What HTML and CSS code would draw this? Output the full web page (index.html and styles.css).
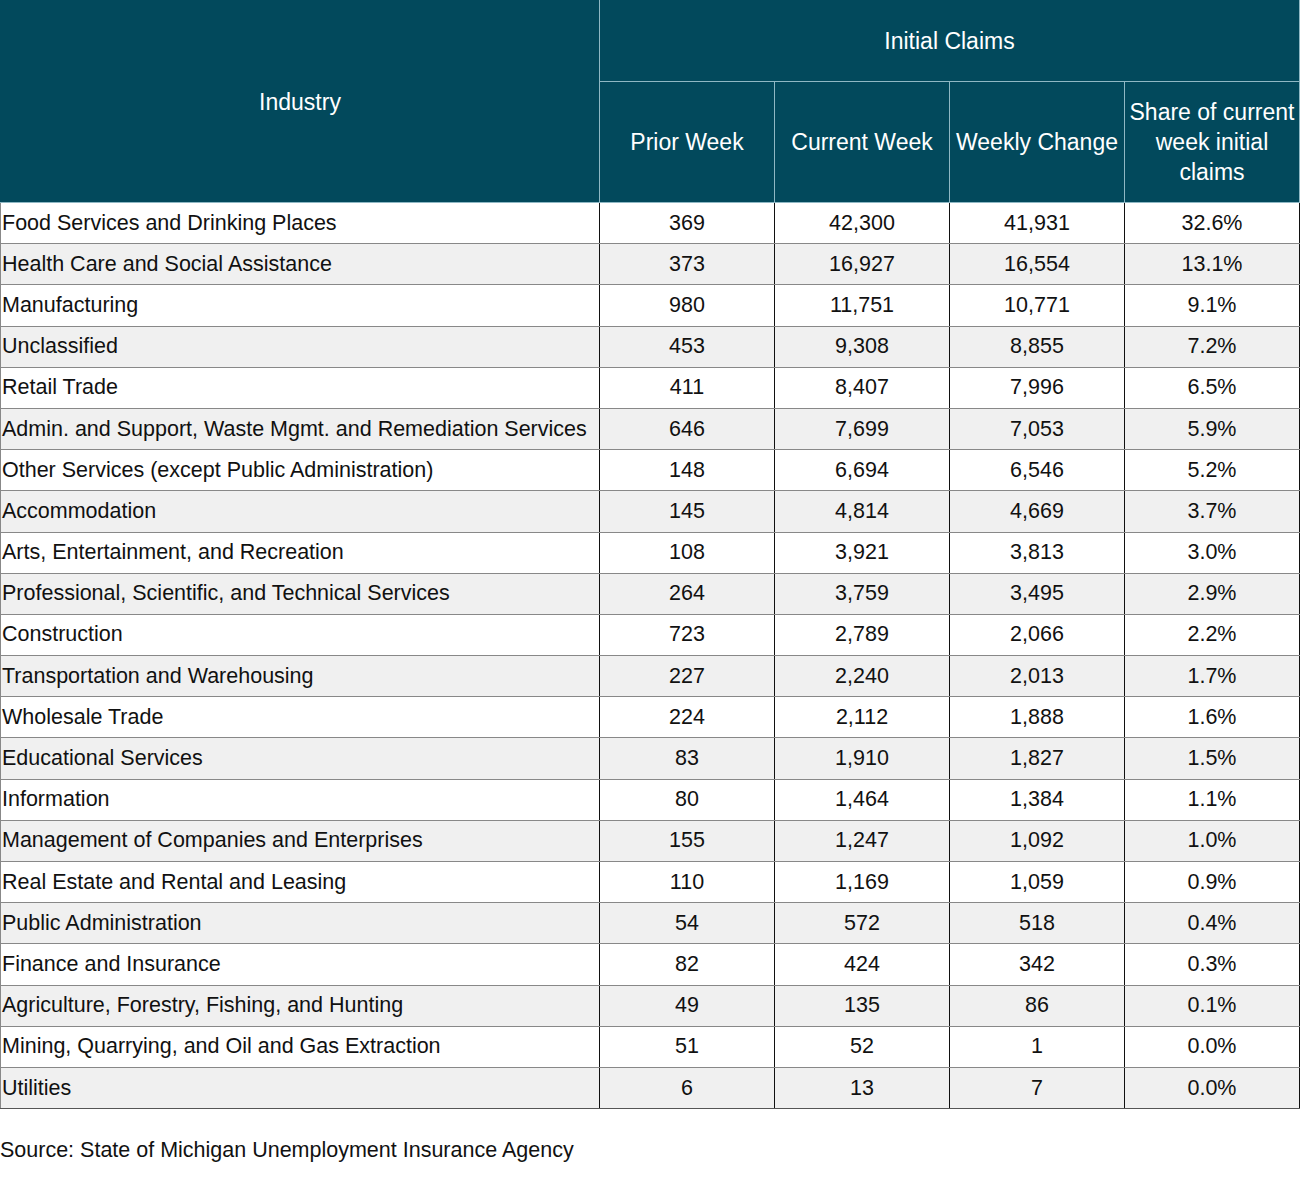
FILE: index.html
```html
<!DOCTYPE html>
<html lang="en">
<head>
  <meta charset="UTF-8">
  <meta name="viewport" content="width=device-width, initial-scale=1.0">
  <title>Initial Claims by Industry</title>
  <link rel="stylesheet" href="styles.css">
</head>
<body>
  <table class="claims">
    <colgroup>
      <col class="col-industry">
      <col class="col-num">
      <col class="col-num">
      <col class="col-num">
      <col class="col-num">
    </colgroup>
    <thead>
      <tr class="head-top">
        <th rowspan="2" class="head-industry">Industry</th>
        <th colspan="4">Initial Claims</th>
      </tr>
      <tr class="head-sub">
        <th>Prior Week</th>
        <th>Current Week</th>
        <th>Weekly Change</th>
        <th class="head-share">Share of current week initial claims</th>
      </tr>
    </thead>
    <tbody>
      <tr><td>Food Services and Drinking Places</td><td>369</td><td>42,300</td><td>41,931</td><td>32.6%</td></tr>
      <tr><td>Health Care and Social Assistance</td><td>373</td><td>16,927</td><td>16,554</td><td>13.1%</td></tr>
      <tr><td>Manufacturing</td><td>980</td><td>11,751</td><td>10,771</td><td>9.1%</td></tr>
      <tr><td>Unclassified</td><td>453</td><td>9,308</td><td>8,855</td><td>7.2%</td></tr>
      <tr><td>Retail Trade</td><td>411</td><td>8,407</td><td>7,996</td><td>6.5%</td></tr>
      <tr><td>Admin. and Support, Waste Mgmt. and Remediation Services</td><td>646</td><td>7,699</td><td>7,053</td><td>5.9%</td></tr>
      <tr><td>Other Services (except Public Administration)</td><td>148</td><td>6,694</td><td>6,546</td><td>5.2%</td></tr>
      <tr><td>Accommodation</td><td>145</td><td>4,814</td><td>4,669</td><td>3.7%</td></tr>
      <tr><td>Arts, Entertainment, and Recreation</td><td>108</td><td>3,921</td><td>3,813</td><td>3.0%</td></tr>
      <tr><td>Professional, Scientific, and Technical Services</td><td>264</td><td>3,759</td><td>3,495</td><td>2.9%</td></tr>
      <tr><td>Construction</td><td>723</td><td>2,789</td><td>2,066</td><td>2.2%</td></tr>
      <tr><td>Transportation and Warehousing</td><td>227</td><td>2,240</td><td>2,013</td><td>1.7%</td></tr>
      <tr><td>Wholesale Trade</td><td>224</td><td>2,112</td><td>1,888</td><td>1.6%</td></tr>
      <tr><td>Educational Services</td><td>83</td><td>1,910</td><td>1,827</td><td>1.5%</td></tr>
      <tr><td>Information</td><td>80</td><td>1,464</td><td>1,384</td><td>1.1%</td></tr>
      <tr><td>Management of Companies and Enterprises</td><td>155</td><td>1,247</td><td>1,092</td><td>1.0%</td></tr>
      <tr><td>Real Estate and Rental and Leasing</td><td>110</td><td>1,169</td><td>1,059</td><td>0.9%</td></tr>
      <tr><td>Public Administration</td><td>54</td><td>572</td><td>518</td><td>0.4%</td></tr>
      <tr><td>Finance and Insurance</td><td>82</td><td>424</td><td>342</td><td>0.3%</td></tr>
      <tr><td>Agriculture, Forestry, Fishing, and Hunting</td><td>49</td><td>135</td><td>86</td><td>0.1%</td></tr>
      <tr><td>Mining, Quarrying, and Oil and Gas Extraction</td><td>51</td><td>52</td><td>1</td><td>0.0%</td></tr>
      <tr><td>Utilities</td><td>6</td><td>13</td><td>7</td><td>0.0%</td></tr>
    </tbody>
  </table>
  <p class="source">Source: State of Michigan Unemployment Insurance Agency</p>
</body>
</html>
```

FILE: styles.css
```css
body {
  margin: 0;
  padding: 0;
  background: #fff;
  font-family: "Liberation Sans", Arial, sans-serif;
  color: #111;
}
.claims {
  width: 1299px;
  border-collapse: collapse;
  table-layout: fixed;
}
.col-industry {
  width: 599px;
}
.col-num {
  width: 175px;
}
.claims th {
  background: #02495c;
  color: #fff;
  font-weight: normal;
  font-size: 23px;
  line-height: 30px;
  text-align: center;
  padding: 0;
  border: 1px solid #8fb8c4;
}
.head-top th {
  height: 80px;
  border-top-color: #02495c;
}
.head-sub th {
  height: 120px;
}
.claims .head-industry {
  border-left-color: #02495c;
}
.claims .head-share {
  padding: 0 4px;
}
.claims td {
  height: 40.2px;
  padding: 0;
  font-size: 21.5px;
  text-align: center;
  border-top: 1px solid #888;
  border-bottom: 1px solid #888;
  border-left: 1px solid #111;
  border-right: 1px solid #111;
}
.claims td:first-child {
  text-align: left;
  padding-left: 1px;
  border-left-color: #888;
}
.claims tbody tr:nth-child(even) td {
  background: #f0f0f0;
}
.claims tbody tr:last-child td {
  border-bottom-color: #555;
}
.source {
  margin: 29px 0 0;
  font-size: 21.5px;
}
```
